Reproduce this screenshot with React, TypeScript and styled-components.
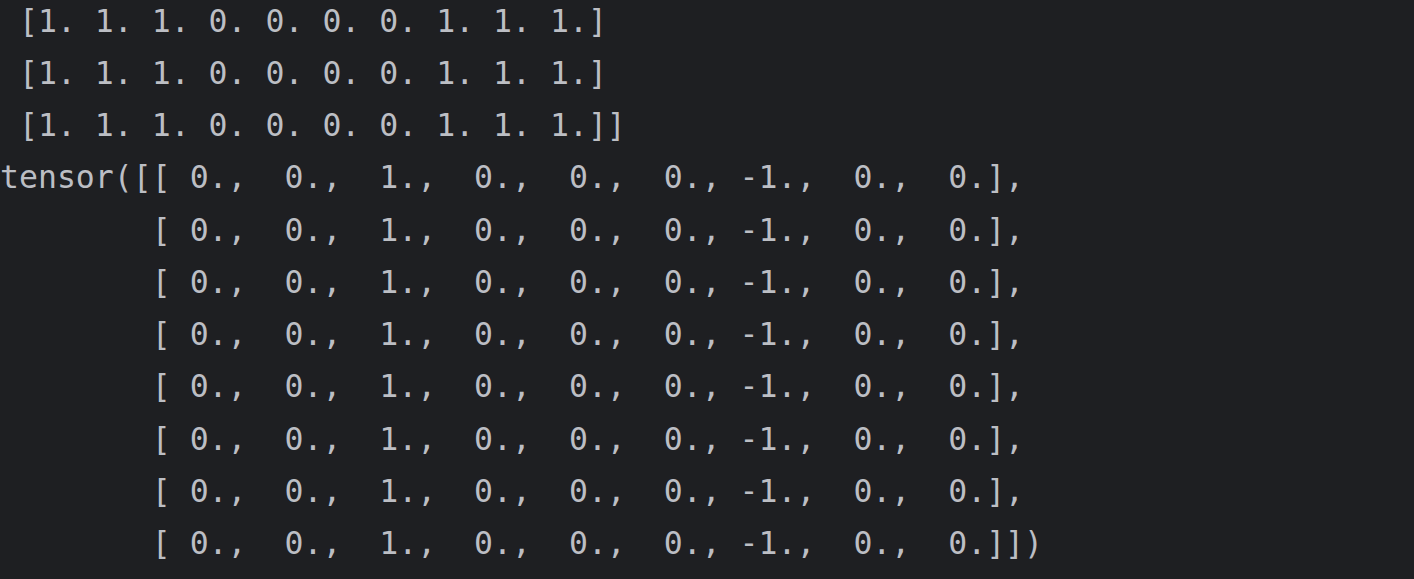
import React from "react";
import styled, { createGlobalStyle } from "styled-components";

const GlobalStyle = createGlobalStyle`
  html, body {
    margin: 0;
    padding: 0;
    background: #1e1f22;
  }
  #root {
    width: 1414px;
    height: 579px;
    overflow: hidden;
  }
`;

const Console = styled.div`
  width: 1414px;
  height: 579px;
  overflow: hidden;
  background: #1e1f22;
  display: flex;
  flex-direction: column;
`;

const Output = styled.pre`
  margin: -5.5px 0 0 0;
  padding: 0;
  font-family: "DejaVu Sans Mono", "Liberation Mono", monospace;
  font-size: 31.5px;
  line-height: 52.25px;
  color: #bcbec4;
  white-space: pre;
`;

const Line = styled.div`
  height: 52.25px;
`;

const row = "[ 0.,  0.,  1.,  0.,  0.,  0., -1.,  0.,  0.]";

const lines: string[] = [
  " [1. 1. 1. 0. 0. 0. 0. 1. 1. 1.]",
  " [1. 1. 1. 0. 0. 0. 0. 1. 1. 1.]",
  " [1. 1. 1. 0. 0. 0. 0. 1. 1. 1.]]",
  "tensor([" + row + ",",
  "        " + row + ",",
  "        " + row + ",",
  "        " + row + ",",
  "        " + row + ",",
  "        " + row + ",",
  "        " + row + ",",
  "        " + row + "])",
];

export default function App() {
  return (
    <>
      <GlobalStyle />
      <Console>
        <Output>
          {lines.map((l, i) => (
            <Line key={i}>{l}</Line>
          ))}
        </Output>
      </Console>
    </>
  );
}
